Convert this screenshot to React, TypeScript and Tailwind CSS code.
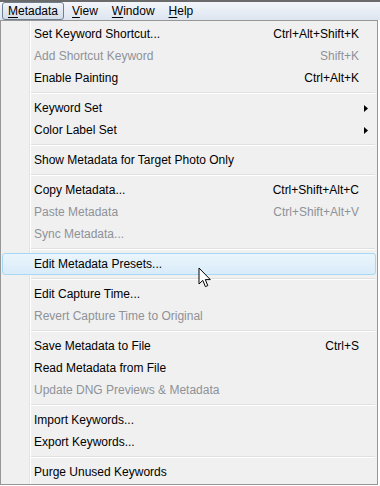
type Item = { label: string; shortcut?: string; disabled?: boolean; submenu?: boolean; hot?: boolean };

const groups: Item[][] = [
  [
    { label: "Set Keyword Shortcut...", shortcut: "Ctrl+Alt+Shift+K" },
    { label: "Add Shortcut Keyword", shortcut: "Shift+K", disabled: true },
    { label: "Enable Painting", shortcut: "Ctrl+Alt+K" },
  ],
  [
    { label: "Keyword Set", submenu: true },
    { label: "Color Label Set", submenu: true },
  ],
  [{ label: "Show Metadata for Target Photo Only" }],
  [
    { label: "Copy Metadata...", shortcut: "Ctrl+Shift+Alt+C" },
    { label: "Paste Metadata", shortcut: "Ctrl+Shift+Alt+V", disabled: true },
    { label: "Sync Metadata...", disabled: true },
  ],
  [{ label: "Edit Metadata Presets...", hot: true }],
  [
    { label: "Edit Capture Time..." },
    { label: "Revert Capture Time to Original", disabled: true },
  ],
  [
    { label: "Save Metadata to File", shortcut: "Ctrl+S" },
    { label: "Read Metadata from File" },
    { label: "Update DNG Previews & Metadata", disabled: true },
  ],
  [
    { label: "Import Keywords..." },
    { label: "Export Keywords..." },
  ],
  [{ label: "Purge Unused Keywords" }],
];

function TopItem({ first, rest, active }: { first: string; rest: string; active?: boolean }) {
  return (
    <div
      className={
        active
          ? "flex h-[18px] items-center rounded-[3px] border border-[#707f92] bg-gradient-to-b from-[#f2f5fa] to-[#d3dce8] px-[5px]"
          : "flex h-[18px] items-center border border-transparent px-[5px]"
      }
    >
      <span>
        <span className="underline underline-offset-2">{first}</span>
        {rest}
      </span>
    </div>
  );
}

function Row({ item }: { item: Item }) {
  return (
    <div
      className={
        "flex h-[22px] items-center rounded-[3px] border pl-[31px] " +
        (item.hot
          ? "border-[#a6d8f4] bg-gradient-to-b from-[#ebf5fc] to-[#d9ecf9]"
          : "border-transparent") +
        (item.disabled ? " text-[#8e9298]" : " text-black")
      }
    >
      <span className="flex-1">{item.label}</span>
      {item.shortcut && <span>{item.shortcut}</span>}
      <span className="flex w-[16px] items-center pl-[5px]">
        {item.submenu && (
          <svg width="4" height="7" viewBox="0 0 4 7">
            <path d="M0 0 L4 3.5 L0 7 Z" fill="#000" />
          </svg>
        )}
      </span>
    </div>
  );
}

export default function App() {
  return (
    <div className="relative h-[486px] w-[380px] overflow-hidden bg-white font-['Liberation_Sans',Arial,sans-serif] text-[12px] text-black">
      <div className="flex h-[20px] items-end gap-[2px] border-t-2 border-[#6b6b6b] bg-gradient-to-b from-[#f3f6fb] to-[#dde5f0] pl-[2px]">
        <TopItem first="M" rest="etadata" active />
        <TopItem first="V" rest="iew" />
        <TopItem first="W" rest="indow" />
        <TopItem first="H" rest="elp" />
      </div>

      <div className="w-[378px] border border-[#979797] bg-[#f0f0f0] bg-[linear-gradient(to_right,transparent_28px,#e2e3e3_28px,#e2e3e3_29px,#ffffff_29px,#ffffff_30px,transparent_30px)] px-[1px] pt-[2px] pb-[1px]">
        {groups.map((g, gi) => (
          <div key={gi}>
            {gi > 0 && (
              <div className="flex h-[8px] flex-col justify-center pl-[29px] pr-[1px]">
                <div className="h-px bg-[#e0e0e0]" />
                <div className="h-px bg-white" />
              </div>
            )}
            {g.map((it) => (
              <Row key={it.label} item={it} />
            ))}
          </div>
        ))}
      </div>

      <svg
        className="absolute left-[198px] top-[267px]"
        width="14"
        height="22"
        viewBox="0 0 14 22"
      >
        <path
          d="M1 1 L1 17 L4.8 13.4 L7.4 19.6 L9.8 18.6 L7.3 12.6 L12.3 12.6 Z"
          fill="#fff"
          stroke="#000"
          strokeWidth="1"
          strokeLinejoin="round"
        />
      </svg>
    </div>
  );
}
